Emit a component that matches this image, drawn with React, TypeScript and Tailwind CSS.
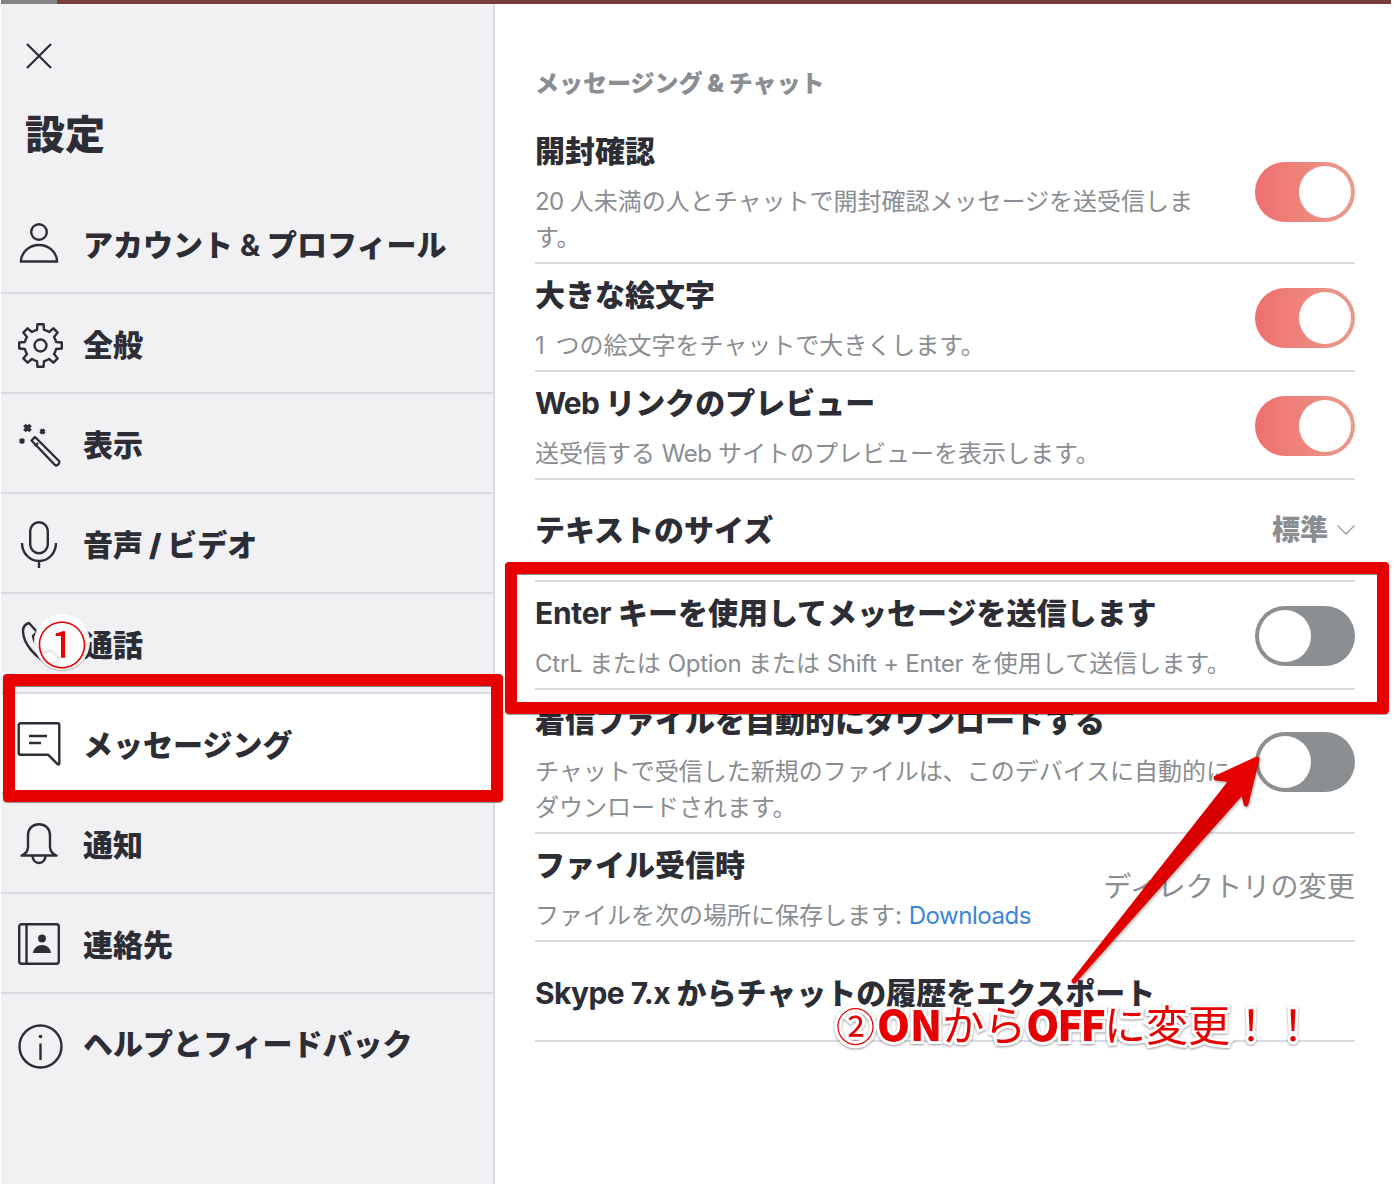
import React from "react";

const FONT = "font-['Inter','Noto_Sans_CJK_JP',sans-serif]";

function gearPath(cx: number, cy: number) {
  const teeth = 8;
  const pts: string[] = [];
  for (let i = 0; i < teeth; i++) {
    const a = (i * 2 * Math.PI) / teeth - Math.PI / 2;
    const s = (2 * Math.PI) / teeth;
    const list: [number, number][] = [
      [16, -0.5 * s],
      [16, -0.28 * s],
      [21.5, -0.18 * s],
      [21.5, 0.18 * s],
      [16, 0.28 * s],
    ];
    for (const [r, da] of list) {
      pts.push(`${(cx + r * Math.cos(a + da)).toFixed(2)} ${(cy + r * Math.sin(a + da)).toFixed(2)}`);
    }
  }
  return "M" + pts.join("L") + "Z";
}

const svgBase = "block w-[44px] h-[44px] overflow-visible shrink-0 text-[#2c2d35]";

const icons: Record<string, React.ReactNode> = {
  person: (
    <svg viewBox="0 0 44 44" fill="none" stroke="currentColor" strokeWidth="2.4" className={svgBase}>
      <circle cx="21" cy="11" r="7.8" />
      <path d="M3 40.5c0-9 8-16.5 18-16.5s18 7.5 18 16.5z" />
    </svg>
  ),
  gear: (
    <svg viewBox="0 0 44 44" fill="none" stroke="currentColor" strokeWidth="2.4" strokeLinejoin="round" className={svgBase}>
      <path d={gearPath(22.5, 24.5)} />
      <circle cx="22.5" cy="24.5" r="6" />
    </svg>
  ),
  wand: (
    <svg viewBox="0 0 44 44" fill="none" stroke="currentColor" strokeWidth="2.4" strokeLinejoin="round" className={svgBase}>
      <path d="M13.500 19.500l3.500-3.500 24 24a2 2 0 0 1 0 2.500l-1.500 1.500a2 2 0 0 1-2.500 0z" />
      <path d="M20 22l-3 3" />
      <path d="M6.500 4l6 6M12.500 4l-6 6" strokeWidth="3.800" />
      <path d="M22.500 8.500l4 4M26.500 8.500l-4 4M2 18l4 4M6 18l-4 4" strokeWidth="3" />
    </svg>
  ),
  mic: (
    <svg viewBox="0 0 44 44" fill="none" stroke="currentColor" strokeWidth="2.4" className={svgBase}>
      <rect x="12.200" y="1.200" width="17.600" height="31" rx="8.800" />
      <path d="M4 22c0 10 7.500 18 17 18s17-8 17-18M21 40v7" />
    </svg>
  ),
  phone: (
    <svg viewBox="0 0 44 44" fill="none" stroke="currentColor" strokeWidth="2.4" className={svgBase}>
      <path d="M11 2c-3.500 1-6 3-6 8 0 12 12 27 26 32 5 1 8-1 10-5l-9-8-5 3c-6-3-11-10-12-17l4-4z" />
    </svg>
  ),
  chat: (
    <svg viewBox="0 0 44 44" fill="none" stroke="currentColor" strokeWidth="2.4" strokeLinejoin="round" className={svgBase}>
      <path d="M2.500 2.200h37a1.800 1.800 0 0 1 1.800 1.800v38.500a1 1 0 0 1-1.700.7l-9.600-9.500h-27.500a1.800 1.800 0 0 1-1.800-1.800v-27.900a1.800 1.800 0 0 1 1.800-1.800z" />
      <path d="M11 15h18M11 22h12" />
    </svg>
  ),
  bell: (
    <svg viewBox="0 0 44 44" fill="none" stroke="currentColor" strokeWidth="2.4" strokeLinejoin="round" className={svgBase}>
      <path d="M3.500 34.500c4-1.500 6.500-4 6.500-8.500v-12c0-6.500 5-10.800 11-10.800s11 4.300 11 10.800v12c0 4.500 2.500 7 6.500 8.500z" />
      <path d="M14.500 34.500c0 4.500 3 7.500 6.500 7.500s6.500-3 6.500-7.500" />
    </svg>
  ),
  contacts: (
    <svg viewBox="0 0 44 44" fill="none" stroke="currentColor" strokeWidth="2.4" className={svgBase}>
      <rect x="1.200" y="3.200" width="39.600" height="39.600" rx="2.500" />
      <path d="M8.500 3.200v39.600" />
      <circle cx="24" cy="17.500" r="3.900" fill="currentColor" stroke="none" />
      <path d="M15 32c.5-5 4.500-8 9-8s8.500 3 9 8z" fill="currentColor" stroke="none" />
    </svg>
  ),
  info: (
    <svg viewBox="0 0 44 44" fill="none" stroke="currentColor" strokeWidth="2.4" className={svgBase}>
      <circle cx="22.500" cy="24.500" r="21" />
      <circle cx="22.500" cy="14.500" r="1.800" fill="currentColor" stroke="none" />
      <path d="M22.500 21.500v16.500" />
    </svg>
  ),
};

function NavRow({ icon, label, active, last }: { icon: string; label: React.ReactNode; active?: boolean; last?: boolean }) {
  return (
    <div className={`h-[100px] flex items-center pl-[17px] ${last ? "" : "border-b-2 border-[#d9dbe1]"} ${active ? "bg-white" : ""}`}>
      {icons[icon]}
      <span className={`ml-[21px] text-[30px] leading-[36px] font-black text-[#2c2d35] ${last ? "-mt-[1px]" : "pt-1"}`}>{label}</span>
    </div>
  );
}

function Toggle({ on }: { on?: boolean }) {
  return on ? (
    <div className="w-[100px] h-[60px] shrink-0 rounded-full p-1 flex justify-end bg-gradient-to-r from-[#f06e6e] to-[#e89c8c]">
      <div className="w-[52px] h-[52px] rounded-full bg-white" />
    </div>
  ) : (
    <div className="w-[100px] h-[60px] shrink-0 rounded-full p-1 flex justify-start bg-[#8c8f91]">
      <div className="w-[52px] h-[52px] rounded-full bg-white" />
    </div>
  );
}

function SettingRow({
  title,
  desc,
  right,
  plain,
}: {
  title: React.ReactNode;
  desc?: React.ReactNode;
  right?: React.ReactNode;
  plain?: string;
}) {
  return (
    <div className={`flex items-center justify-between border-b-2 border-[#d9dbe1] ${desc ? "pt-[2px]" : plain}`}>
      <div className="min-w-0">
        <div className={`text-[30px] leading-[36px] font-black text-[#2c2d35] whitespace-nowrap ${desc ? "pt-[11px]" : ""}`}>{title}</div>
        {desc && <div className="mt-[15px] pb-[6px] text-[24px] leading-[36px] text-[#8a8d91] whitespace-nowrap">{desc}</div>}
      </div>
      {right}
    </div>
  );
}

const T = ({ c, t }: { c: string; t: string }) => <span className={c}>{t}</span>;

export default function App() {
  return (
    <div className={`relative w-[1394px] h-[1184px] overflow-hidden bg-white ${FONT}`}>
      <div className="ml-px mr-[3px] h-1 flex">
        <div className="w-[56px] bg-[#858585]" />
        <div className="flex-1 bg-[#7a3d3b]" />
      </div>
      <div className="flex h-[1180px]">
        <aside className="ml-px w-[494px] shrink-0 bg-[#f1f1f3] border-r-2 border-[#d9dbe1]">
          <div className="pl-[25px] pt-[39px] h-[190px]">
            <svg viewBox="0 0 26 26" fill="none" stroke="#2c2d35" strokeWidth="2.200" className="block w-[26px] h-[26px]">
              <path d="M1 1l24 24M25 1L1 25" />
            </svg>
            <h1 className="mt-[37px] -ml-px text-[40px] leading-[58px] font-black text-[#2c2d35]">設定</h1>
          </div>
          <NavRow
            icon="person"
            label={
              <>
                アカウント <T c="font-bold mx-px" t="&" /> プロフィール
              </>
            }
          />
          <NavRow icon="gear" label="全般" />
          <NavRow icon="wand" label="表示" />
          <NavRow icon="mic" label="音声 / ビデオ" />
          <NavRow icon="phone" label="通話" />
          <NavRow icon="chat" label="メッセージング" active />
          <NavRow icon="bell" label="通知" />
          <NavRow icon="contacts" label="連絡先" />
          <NavRow icon="info" label="ヘルプとフィードバック" last />
        </aside>
        <main className="w-[820px] ml-[40px] shrink-0">
          <div className="pt-[62px] pb-[18px] text-[24px] leading-[36px] font-black text-[#8a8d91]">メッセージング & チャット</div>
          <SettingRow
            title="開封確認"
            desc={
              <>
                <T c="tracking-[-0.600px]" t="20 " />人未満の人とチャットで開封確認メッセージを送受信しま
                <br />
                す。
              </>
            }
            right={<Toggle on />}
          />
          <SettingRow
            title="大きな絵文字"
            desc={
              <>
                <T c="mr-[4px]" t="1 " />つの絵文字をチャットで大きくします。
              </>
            }
            right={<Toggle on />}
          />
          <SettingRow
            title={
              <>
                <T c="font-bold tracking-[-0.800px]" t="Web " />リンクのプレビュー
              </>
            }
            desc={
              <>
                送受信する <T c="tracking-[-0.400px]" t="Web " />サイトのプレビューを表示します。
              </>
            }
            right={<Toggle on />}
          />
          <SettingRow
            title="テキストのサイズ"
            plain="h-[102px]"
            right={
              <div className="flex items-center gap-[9px] text-[#8a8d91]">
                <span className="text-[28px] leading-[36px] font-black">標準</span>
                <svg viewBox="0 0 18 10" fill="none" stroke="#9a9da1" strokeWidth="1.300" className="block w-[18px] h-[10px]">
                  <path d="M.5.5l8.500 8.500 8.500-8.500" />
                </svg>
              </div>
            }
          />
          <SettingRow
            title={
              <>
                <T c="font-bold tracking-[-0.300px]" t="Enter " />キーを使用してメッセージを送信します
              </>
            }
            desc={
              <>
                <T c="tracking-[-0.250px]" t="CtrL " />または <T c="tracking-[-0.250px]" t="Option " />または <T c="tracking-[-0.250px]" t="Shift + Enter " />を使用して送信します。
              </>
            }
            right={<Toggle />}
          />
          <SettingRow
            title="着信ファイルを自動的にダウンロードする"
            desc={
              <>
                チャットで受信した新規のファイルは、このデバイスに自動的に
                <br />
                ダウンロードされます。
              </>
            }
            right={<Toggle />}
          />
          <SettingRow
            title="ファイル受信時"
            desc={
              <>
                ファイルを次の場所に保存します: <span className="text-[#3a86d8] tracking-[-0.450px]">Downloads</span>
              </>
            }
            right={<span className="text-[28px] leading-[36px] text-[#8a8d91] whitespace-nowrap -mt-[2px] tracking-[0.200px]">ディレクトリの変更</span>}
          />
          <SettingRow
            plain="h-[100px] pt-1"
            title={
              <>
                <T c="font-bold tracking-[-0.600px]" t="Skype 7.x " />からチャットの履歴をエクスポート
              </>
            }
          />
        </main>
      </div>

      {/* annotations */}
      <div className="absolute left-[3px] top-[674px] w-[500px] h-[128px] border-[12px] border-[#e60000] rounded-[4px] shadow-[0_1px_1px_rgba(0,0,0,0.4),inset_0_1px_0_rgba(0,0,0,0.45)]" />
      <div className="absolute left-[505px] top-[562px] w-[884px] h-[152px] border-[12px] border-[#e60000] rounded-[4px] shadow-[0_1px_1px_rgba(0,0,0,0.4),inset_0_1px_0_rgba(0,0,0,0.45)]" />

      <div className="absolute left-[34px] top-[614px] w-[56px] h-[56px] rounded-full bg-white/90 shadow-[0_1px_1px_rgba(0,0,0,0.3)] flex items-center justify-center">
        <span className="text-[50px] leading-[56px] text-[#e60000] font-['Noto_Sans_CJK_JP',sans-serif]">①</span>
      </div>

      <svg viewBox="0 0 1394 1184" className="absolute inset-0 w-[1394px] h-[1184px] pointer-events-none">
        <defs>
          <linearGradient id="arr" x1="1073" y1="981" x2="1259" y2="757" gradientUnits="userSpaceOnUse">
            <stop offset="0" stopColor="#e60000" />
            <stop offset="0.75" stopColor="#d80000" />
            <stop offset="1" stopColor="#ee0000" />
          </linearGradient>
        </defs>
        <path
          d="M1074 981L1232 780L1216 778L1257 759L1246 804L1243 791Z"
          fill="url(#arr)"
          stroke="url(#arr)"
          strokeWidth="5"
          strokeLinejoin="round"
          className="drop-shadow-[1px_2px_1px_rgba(0,0,0,0.25)]"
        />
      </svg>

      <div className="absolute left-[836px] top-[995px] whitespace-nowrap text-[42px] leading-[56px] text-[#e60000] font-['Noto_Sans_CJK_JP',sans-serif] [-webkit-text-stroke:6px_white] [paint-order:stroke_fill] drop-shadow-[0_1px_1px_rgba(0,0,0,0.4)]">
        <span className="text-[39px] mr-[2px]">②</span>
        <span className="font-black">ON</span>から<span className="font-black tracking-[-2px]">OFF</span>に変更！！
      </div>
    </div>
  );
}
